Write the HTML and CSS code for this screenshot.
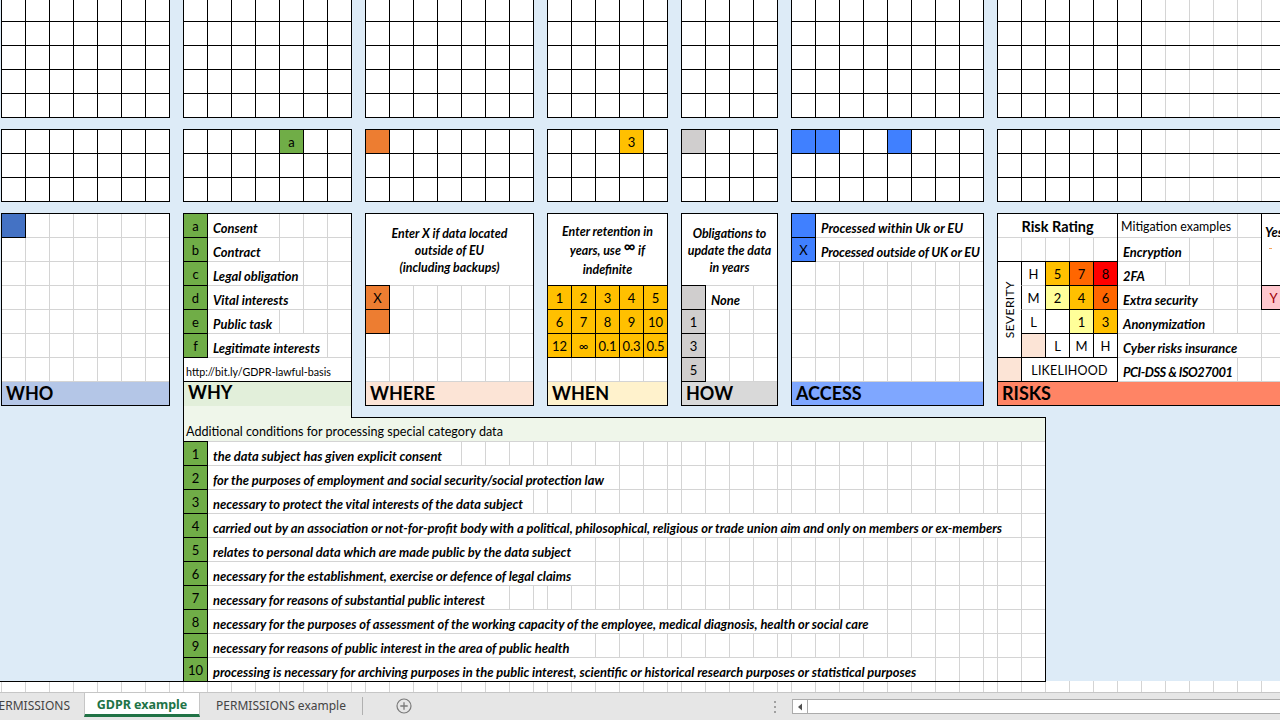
FILE: index.html
```html
<!DOCTYPE html>
<html lang="en">
<head>
<meta charset="utf-8">
<title>GDPR example</title>
<link rel="stylesheet" href="styles.css">
</head>
<body>
<div class="sheet">
  <!-- top band of empty grids -->
  <div class="blk n7 gc1 gr1"></div>
  <div class="blk n7 gc3 gr1"></div>
  <div class="blk n7 gc5 gr1"></div>
  <div class="blk n5 gc7 gr1"></div>
  <div class="blk n4 gc9 gr1"></div>
  <div class="blk n8 gc11 gr1"></div>
  <div class="blk blk-g n14 gc13 gr1"></div>

  <!-- second band of grids -->
  <div class="blk n7 gc1 gr3"></div>
  <div class="blk n7 gc3 gr3"><div class="cell green x5 y1">a</div></div>
  <div class="blk n7 gc5 gr3"><div class="cell orange x1 y1"></div></div>
  <div class="blk n5 gc7 gr3"><div class="cell yellow x4 y1">3</div></div>
  <div class="blk n4 gc9 gr3"><div class="cell grey x1 y1"></div></div>
  <div class="blk n8 gc11 gr3">
    <div class="cell blue x1 y1"></div>
    <div class="cell blue x2 y1"></div>
    <div class="cell blue x5 y1"></div>
  </div>
  <div class="blk blk-g n14 gc13 gr3"></div>

  <!-- WHO -->
  <div class="panel n7 gc1 gr5">
    <div class="cell navy x1 y1"></div>
    <div class="band band-who">WHO</div>
  </div>

  <!-- WHY -->
  <div class="panel why n7">
    <div class="cell green x1 y1">a</div><div class="txt x2 e5 y1">Consent</div>
    <div class="cell green x1 y2">b</div><div class="txt x2 e5 y2">Contract</div>
    <div class="cell green x1 y3">c</div><div class="txt x2 e6 y3">Legal obligation</div>
    <div class="cell green x1 y4">d</div><div class="txt x2 e6 y4">Vital interests</div>
    <div class="cell green x1 y5">e</div><div class="txt x2 e5 y5">Public task</div>
    <div class="cell green x1 y6">f</div><div class="txt x2 e7 y6">Legitimate interests</div>
    <div class="url y7">http://bit.ly/GDPR-lawful-basis</div>
    <div class="band band-why">WHY</div>
    <div class="strip"></div>
  </div>

  <!-- WHERE -->
  <div class="panel n7 gc5 gr5">
    <div class="merge"><p class="note">Enter X if data located<br>outside of EU<br>(including backups)</p></div>
    <div class="cell orange x1 y4">X</div>
    <div class="cell orange x1 y5"></div>
    <div class="band band-where">WHERE</div>
  </div>

  <!-- WHEN -->
  <div class="panel n5 gc7 gr5">
    <div class="merge"><p class="note note-when">Enter retention in<br>years, use <span class="inf">∞</span> if<br>indefinite</p></div>
    <div class="cell yellow x1 y4">1</div>
    <div class="cell yellow x2 y4">2</div>
    <div class="cell yellow x3 y4">3</div>
    <div class="cell yellow x4 y4">4</div>
    <div class="cell yellow x5 y4">5</div>
    <div class="cell yellow x1 y5">6</div>
    <div class="cell yellow x2 y5">7</div>
    <div class="cell yellow x3 y5">8</div>
    <div class="cell yellow x4 y5">9</div>
    <div class="cell yellow x5 y5">10</div>
    <div class="cell yellow x1 y6">12</div>
    <div class="cell yellow x2 y6">∞</div>
    <div class="cell yellow x3 y6">0.1</div>
    <div class="cell yellow x4 y6">0.3</div>
    <div class="cell yellow x5 y6">0.5</div>
    <div class="band band-when">WHEN</div>
  </div>

  <!-- HOW -->
  <div class="panel n4 gc9 gr5">
    <div class="merge"><p class="note">Obligations to<br>update the data<br>in years</p></div>
    <div class="cell grey x1 y4"></div><div class="txt x2 e4 y4">None</div>
    <div class="cell grey x1 y5">1</div>
    <div class="cell grey x1 y6">3</div>
    <div class="cell grey x1 y7">5</div>
    <div class="band band-how">HOW</div>
  </div>

  <!-- ACCESS -->
  <div class="panel n8 gc11 gr5">
    <div class="cell blue x1 y1"></div><div class="txt x2 e9 y1">Processed within Uk or EU</div>
    <div class="cell blue x1 y2">X</div><div class="txt tight x2 e9 y2">Processed outside of UK or EU</div>
    <div class="band band-access">ACCESS</div>
  </div>

  <!-- RISKS -->
  <div class="panel risks n14 gc13 gr5">
    <div class="rr x1 e6 y1">Risk Rating</div>
    <div class="rr-gap x1 e6 y2"></div>
    <div class="cell sev x1 y3 ye7"><span>SEVERITY</span></div>
    <div class="cell lab open-b x2 y3">H</div>
    <div class="cell lab open-tb x2 y4">M</div>
    <div class="cell lab open-t x2 y5">L</div>
    <div class="cell amber x3 y3">5</div>
    <div class="cell tangerine x4 y3">7</div>
    <div class="cell red x5 y3">8</div>
    <div class="cell pale x3 y4">2</div>
    <div class="cell amber x4 y4">4</div>
    <div class="cell tangerine x5 y4">6</div>
    <div class="cell x3 y5"></div>
    <div class="cell pale x4 y5">1</div>
    <div class="cell amber x5 y5">3</div>
    <div class="cell peach x2 y6"></div>
    <div class="cell lab x3 y6">L</div>
    <div class="cell lab x4 y6">M</div>
    <div class="cell lab x5 y6">H</div>
    <div class="cell peach x1 y7"></div>
    <div class="cell lab likely x2 e6 y7">LIKELIHOOD</div>
    <div class="txt reg x6 e11 y1">Mitigation examples</div>
    <div class="txt x6 e9 y2">Encryption</div>
    <div class="txt x6 e8 y3">2FA</div>
    <div class="txt x6 e10 y4">Extra security</div>
    <div class="txt x6 e10 y5">Anonymization</div>
    <div class="txt x6 e12 y6">Cyber risks insurance</div>
    <div class="txt tighter x6 e11 y7">PCI-DSS &amp; ISO27001</div>
    <div class="cell yes x12 e15 y1 ye4">Yes<i class="tick"></i></div>
    <div class="cell pink x12 y4">Y</div>
    <div class="band band-risks">RISKS</div>
  </div>

  <!-- special category conditions -->
  <div class="cond">
    <div class="cond-head">Additional conditions for processing special category data</div>
    <div class="cell green x1 y2">1</div><div class="txt x2 e13 y2">the data subject has given explicit consent</div>
    <div class="cell green x1 y3">2</div><div class="txt x2 e20 y3">for the purposes of employment and social security/social protection law</div>
    <div class="cell green x1 y4">3</div><div class="txt x2 e16 y4">necessary to protect the vital interests of the data subject</div>
    <div class="cell green x1 y5">4</div><div class="txt x2 e38 y5">carried out by an association or not-for-profit body with a political, philosophical, religious or trade union aim and only on members or ex-members</div>
    <div class="cell green x1 y6">5</div><div class="txt x2 e19 y6">relates to personal data which are made public by the data subject</div>
    <div class="cell green x1 y7">6</div><div class="txt x2 e19 y7">necessary for the establishment, exercise or defence of legal claims</div>
    <div class="cell green x1 y8">7</div><div class="txt x2 e15 y8">necessary for reasons of substantial public interest</div>
    <div class="cell green x1 y9">8</div><div class="txt x2 e32 y9">necessary for the purposes of assessment of the working capacity of the employee, medical diagnosis, health or social care</div>
    <div class="cell green x1 y10">9</div><div class="txt x2 e19 y10">necessary for reasons of public interest in the area of public health</div>
    <div class="cell green x1 y11">10</div><div class="txt x2 e34 y11">processing is necessary for archiving purposes in the public interest, scientific or historical research purposes or statistical purposes</div>
  </div>

  <div class="tail"></div>
</div>

<div class="tabbar">
  <div class="tab tab-cut">PERMISSIONS</div>
  <div class="tab tab-active">GDPR example</div>
  <div class="tab tab-plain">PERMISSIONS example</div>
  <div class="tab-sep"></div>
  <svg class="add" width="16" height="16" viewBox="0 0 16 16" aria-label="New sheet">
    <circle cx="8" cy="8" r="7" fill="none" stroke="#7a7a7a" stroke-width="1.2"/>
    <path d="M8 4.3v7.4M4.3 8h7.4" stroke="#7a7a7a" stroke-width="1.3"/>
  </svg>
  <div class="fill"></div>
  <svg class="grip" width="4" height="14" viewBox="0 0 4 14">
    <rect x="1" y="1" width="2" height="2" fill="#a0a0a0"/>
    <rect x="1" y="6" width="2" height="2" fill="#a0a0a0"/>
    <rect x="1" y="11" width="2" height="2" fill="#a0a0a0"/>
  </svg>
  <div class="hscroll">
    <div class="hs-btn"><svg width="6" height="8" viewBox="0 0 6 8"><path d="M5 0.5v7L1 4z" fill="#505050"/></svg></div>
  </div>
</div>
</body>
</html>
```
FILE: styles.css
```css
* { box-sizing: border-box; }
html, body { margin: 0; padding: 0; }
body {
  width: 1280px;
  height: 720px;
  overflow: hidden;
  background: #ddebf7;
  font-family: Lato, "Liberation Sans", sans-serif;
  color: #000;
}

/* ---------- sheet layout ---------- */
.sheet {
  display: grid;
  margin-top: -3px;
  padding-left: 1px;
  height: 695px;
  overflow: hidden;
  grid-template-columns: 168px 14px 168px 14px 168px 14px 120px 14px 96px 14px 192px 14px 48px 1fr;
  grid-template-rows: 120px 12px 72px 12px 192px 12px 264px 11px;
}
.gc1 { grid-column: 1; }
.gc3 { grid-column: 3; }
.gc5 { grid-column: 5; }
.gc7 { grid-column: 7; }
.gc9 { grid-column: 9; }
.gc11 { grid-column: 11; }
.gc13 { grid-column: 13 / 15; }
.gr1 { grid-row: 1; }
.gr3 { grid-row: 3; }
.gr5 { grid-row: 5; }

.n4 { --n: 4; }
.n5 { --n: 5; }
.n7 { --n: 7; }
.n8 { --n: 8; }
.n14 { --n: 14; }

.blk, .panel {
  display: grid;
  grid-template-columns: repeat(var(--n), 24px);
  grid-auto-rows: 24px;
  margin: 0 -1px -1px 0;
  border: 1px solid #000;
  background-color: #fff;
  background-origin: border-box;
  background-size: 24px 24px;
}
.blk {
  background-image:
    linear-gradient(to right, #000 1px, transparent 1px),
    linear-gradient(to bottom, #000 1px, transparent 1px);
}
.blk-g {
  background-image:
    linear-gradient(to bottom, #000 1px, transparent 1px),
    repeating-linear-gradient(to right, #000 0 1px, transparent 1px 24px),
    linear-gradient(to right, #d4d4d4 1px, transparent 1px);
  background-size: 24px 24px, 145px 100%, 24px 24px;
  background-repeat: repeat, no-repeat, repeat;
}
.panel {
  grid-template-rows: repeat(8, 24px);
  background-image:
    linear-gradient(to right, #d4d4d4 1px, transparent 1px),
    linear-gradient(to bottom, #d4d4d4 1px, transparent 1px);
}

/* ---------- cells ---------- */
.cell {
  margin: -1px 0 0 -1px;
  border: 1px solid #000;
  background: #fff;
  display: flex;
  align-items: flex-end;
  justify-content: center;
  padding-bottom: 3px;
  font-size: 13px;
  line-height: 15px;
  white-space: nowrap;
}
.green { background: #70ad47; }
.orange { background: #ed7d31; }
.yellow { background: #ffc000; }
.grey { background: #d0cece; }
.blue { background: #4080ff; }
.navy { background: #4472c4; }
.amber { background: #ffc000; }
.tangerine { background: #ff6600; }
.red { background: #ff0000; }
.pale { background: #ffff99; }
.peach { background: #fce4d6; }
.pink { background: #ffc7ce; color: #9c0006; }

.txt {
  margin: 0 1px 1px 0;
  background: #fff;
  display: flex;
  align-items: flex-end;
  padding: 0 0 1px 5px;
  font-style: italic;
  font-weight: 700;
  font-size: 12.9px;
  line-height: 16px;
  white-space: nowrap;
  overflow: hidden;
}
.txt.reg { font-style: normal; font-weight: 400; padding-left: 3px; font-size: 12.4px; padding-bottom: 2px; }
.tight { letter-spacing: -0.15px; }
.tighter { letter-spacing: -0.45px; }

.merge {
  grid-column: 1 / -1;
  grid-row: 1 / 4;
  margin: 0 1px 1px 0;
  background: #fff;
  display: flex;
  align-items: center;
  justify-content: center;
}
.note {
  margin: 0;
  padding-top: 2px;
  text-align: center;
  font-style: italic;
  font-weight: 700;
  font-size: 12.4px;
  line-height: 17px;
  white-space: nowrap;
}
.note-when { line-height: 19px; padding-top: 1px; }
.inf { font-size: 16px; font-style: normal; vertical-align: 3px; line-height: 10px; }

.band {
  grid-column: 1 / -1;
  grid-row: 8;
  margin: 0 1px 1px 0;
  display: flex;
  align-items: flex-end;
  padding: 0 0 2px 4px;
  font-weight: 700;
  font-size: 18px;
  line-height: 20px;
}
.band-who { background: #b4c6e7; }
.band-why { background: #e2efda; margin: -1px 1px 0 0; border-top: 1px solid #000; padding-bottom: 4px; }
.band-where { background: #fce4d6; }
.band-when { background: #fff2cc; }
.band-how { background: #d9d9d9; }
.band-access { background: #7fa7ff; }
.band-risks { background: #ff8465; }

/* WHY panel reaches down into the special-category box */
.why {
  grid-column: 3;
  grid-row: 5 / 7;
  margin-bottom: -1px;
  border-bottom: none;
  grid-template-rows: repeat(8, 24px) 1fr;
  z-index: 1;
}
.url {
  grid-column: 1 / -1;
  margin: 0 1px 0 0;
  background: #fff;
  display: flex;
  align-items: flex-end;
  padding: 0 0 4px 2px;
  font-size: 10.7px;
  line-height: 13px;
  white-space: nowrap;
}
.strip {
  grid-column: 1 / -1;
  grid-row: 9;
  margin-right: 1px;
  background: #eff6ea;
}

/* RISKS panel */
.rr {
  margin-bottom: 1px;
  background: #fff;
  border-right: 1px solid #000;
  display: flex;
  align-items: center;
  justify-content: center;
  font-weight: 700;
  font-size: 14.5px;
  padding-top: 2px;
}
.rr-gap { margin-top: -1px; border-right: 1px solid #000; }
.sev { align-items: center; padding: 0; }
.sev span {
  writing-mode: vertical-rl;
  transform: rotate(180deg);
  font-size: 12px;
  letter-spacing: 0.4px;
}
.lab { font-size: 13px; }
.open-b { border-bottom-color: #d4d4d4; }
.open-tb { border-top-color: #d4d4d4; border-bottom-color: #d4d4d4; }
.open-t { border-top-color: #d4d4d4; }
.likely { font-size: 12.5px; letter-spacing: 0.2px; }
.yes {
  flex-direction: column;
  align-items: flex-start;
  justify-content: flex-start;
  padding: 11px 0 0 3px;
  font-style: italic;
  font-weight: 700;
  font-size: 12.9px;
}
.tick {
  display: block;
  width: 3px;
  height: 1px;
  margin: 8px 0 0 4px;
  background: #f4a460;
}

/* special category conditions */
.cond {
  grid-column: 3 / 14;
  grid-row: 7;
  margin: 0 -1px -1px 0;
  border: 1px solid #000;
  display: grid;
  grid-template-columns: repeat(7, 24px) 14px repeat(7, 24px) 14px repeat(5, 24px) 14px repeat(4, 24px) 14px repeat(8, 24px) 14px 24px 24px;
  grid-template-rows: repeat(11, 24px);
  background-color: #fff;
  background-image:
    repeating-linear-gradient(to bottom, #d4d4d4 0 1px, transparent 1px 24px),
    repeating-linear-gradient(to right, #d4d4d4 0 1px, transparent 1px 24px),
    repeating-linear-gradient(to right, #d4d4d4 0 1px, transparent 1px 24px),
    repeating-linear-gradient(to right, #d4d4d4 0 1px, transparent 1px 24px),
    repeating-linear-gradient(to right, #d4d4d4 0 1px, transparent 1px 24px),
    repeating-linear-gradient(to right, #d4d4d4 0 1px, transparent 1px 24px),
    repeating-linear-gradient(to right, #d4d4d4 0 1px, transparent 1px 24px);
  background-position: 0 0, 24px 0, 182px 0, 364px 0, 498px 0, 608px 0, 814px 0;
  background-size: 100% 100%, 168px 100%, 192px 100%, 144px 100%, 120px 100%, 216px 100%, 48px 100%;
  background-repeat: no-repeat;
  background-origin: border-box;
}
.cond-head {
  grid-column: 1 / -1;
  grid-row: 1;
  margin: 0 1px 1px 0;
  background: #eff6ea;
  display: flex;
  align-items: flex-end;
  padding: 0 0 2px 2px;
  font-size: 12.6px;
  line-height: 15px;
}

.tail {
  grid-column: 1 / -1;
  grid-row: 8;
  margin-left: -1px;
  background-color: #fff;
  background-image:
    linear-gradient(#000, #000),
    repeating-linear-gradient(to right, #d4d4d4 0 1px, transparent 1px 24px),
    repeating-linear-gradient(to right, #d4d4d4 0 1px, transparent 1px 24px),
    repeating-linear-gradient(to right, #d4d4d4 0 1px, transparent 1px 24px),
    repeating-linear-gradient(to right, #d4d4d4 0 1px, transparent 1px 24px),
    repeating-linear-gradient(to right, #d4d4d4 0 1px, transparent 1px 24px),
    repeating-linear-gradient(to right, #d4d4d4 0 1px, transparent 1px 24px),
    repeating-linear-gradient(to right, #d4d4d4 0 1px, transparent 1px 24px);
  background-position: 0 0, 1px 0, 183px 0, 365px 0, 547px 0, 681px 0, 791px 0, 997px 0;
  background-size: 1046px 1px, 192px 100%, 192px 100%, 192px 100%, 144px 100%, 120px 100%, 216px 100%, 288px 100%;
  background-repeat: no-repeat;
}

/* ---------- grid placement helpers ---------- */
.x1 { grid-column-start: 1; }
.x2 { grid-column-start: 2; }
.x3 { grid-column-start: 3; }
.x4 { grid-column-start: 4; }
.x5 { grid-column-start: 5; }
.x6 { grid-column-start: 6; }
.x12 { grid-column-start: 12; }
.e4 { grid-column-end: 4; }
.e5 { grid-column-end: 5; }
.e6 { grid-column-end: 6; }
.e7 { grid-column-end: 7; }
.e8 { grid-column-end: 8; }
.e9 { grid-column-end: 9; }
.e10 { grid-column-end: 10; }
.e11 { grid-column-end: 11; }
.e12 { grid-column-end: 12; }
.e13 { grid-column-end: 13; }
.e15 { grid-column-end: 15; }
.e16 { grid-column-end: 16; }
.e19 { grid-column-end: 19; }
.e20 { grid-column-end: 20; }
.e32 { grid-column-end: 32; }
.e34 { grid-column-end: 34; }
.e38 { grid-column-end: 38; }
.y1 { grid-row-start: 1; }
.y2 { grid-row-start: 2; }
.y3 { grid-row-start: 3; }
.y4 { grid-row-start: 4; }
.y5 { grid-row-start: 5; }
.y6 { grid-row-start: 6; }
.y7 { grid-row-start: 7; }
.y8 { grid-row-start: 8; }
.y9 { grid-row-start: 9; }
.y10 { grid-row-start: 10; }
.y11 { grid-row-start: 11; }
.ye4 { grid-row-end: 4; }
.ye7 { grid-row-end: 7; }

/* ---------- sheet tabs ---------- */
.tabbar {
  height: 28px;
  background: #e6e6e6;
  border-top: 1px solid #c6c6c6;
  display: flex;
  align-items: flex-start;
  font-family: "Noto Sans", "Open Sans", sans-serif;
  font-size: 12px;
  color: #444;
}
.tab {
  height: 24px;
  display: flex;
  align-items: center;
  padding-top: 1px;
  white-space: nowrap;
  flex: none;
}
.tab-cut {
  width: 84px;
  justify-content: flex-end;
  padding-right: 14px;
  overflow: hidden;
}
.tab-active {
  width: 116px;
  justify-content: center;
  background: #fff;
  color: #217346;
  font-weight: 700;
  font-size: 12.5px;
  border-left: 1px solid #c6c6c6;
  border-right: 1px solid #c6c6c6;
  border-bottom: 3px solid #217346;
}
.tab-plain {
  width: 162px;
  justify-content: center;
}
.tab-sep {
  flex: none;
  width: 1px;
  height: 18px;
  margin-top: 4px;
  background: #b0b0b0;
}
.add { flex: none; margin: 5px 0 0 33px; }
.fill { flex: 1; }
.grip { flex: none; margin: 7px 15px 0 0; }
.hscroll {
  flex: none;
  width: 488px;
  height: 15px;
  margin-top: 6px;
  border: 1px solid #ababab;
  border-right: none;
  background: #fff;
  display: flex;
}
.hs-btn {
  width: 15px;
  height: 13px;
  border-right: 1px solid #ababab;
  display: flex;
  align-items: center;
  justify-content: center;
}
```
